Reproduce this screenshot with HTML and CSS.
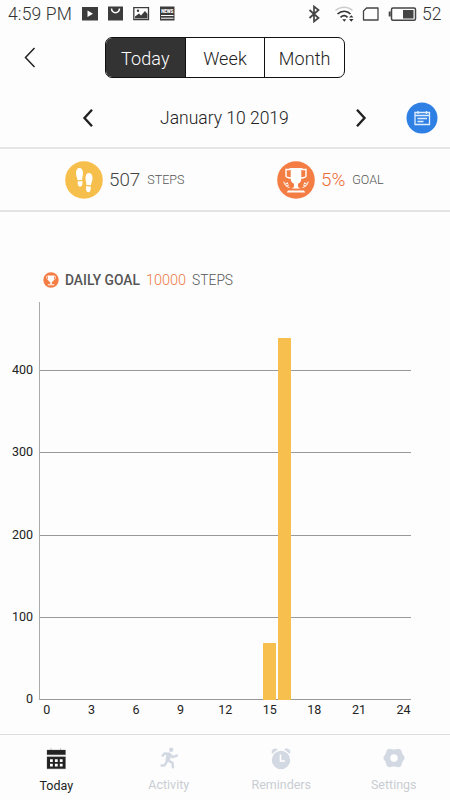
FILE: index.html
```html
<!DOCTYPE html>
<html lang="en">
<head>
<meta charset="utf-8">
<title>Steps</title>
<link rel="stylesheet" href="styles.css">
</head>
<body>
<svg width="0" height="0" class="defs">
  <symbol id="trophy" viewBox="0 0 38 38">
    <circle cx="19" cy="19" r="18.800" fill="#f47d43"/>
    <path d="M13 8.500H9v6.500c0 1.300 2 1.800 5 2M25 8.500h4v6.500c0 1.300-2 1.800-5 2" fill="none" stroke="#fff" stroke-width="1.400"/>
    <path d="M12.500 7h13v2h-1.200v8.500c0 3-1.500 4.500-3.300 5.200V26l2.500 1.500h-9L17 26v-3.300c-1.800-.7-3.300-2.200-3.300-5.200V9h-1.200zM11 29.500h16l1.200 2H9.800z" fill="#fff"/>
    <path d="M6.800 20.500c.5 3.200 2.500 5.300 5.700 6M8 23l2.800-.5M9.300 25l2.500-1M10 21.300l1 2M31.200 20.500c-.5 3.200-2.500 5.300-5.700 6M30 23l-2.800-.5M28.700 25l-2.500-1M28 21.300l-1 2" fill="none" stroke="#fff" stroke-width="1"/>
  </symbol>
  <symbol id="trophy-small" viewBox="0 0 16 16">
    <circle cx="8" cy="8" r="7.700" fill="#f47d43"/>
    <path d="M5 3.500h6v3.500c0 1.800-1 2.500-2.200 3V12H7.200v-2C6 9.500 5 8.800 5 7zM4.800 12.300h6.400v1H4.800z" fill="#fff"/>
    <path d="M5.500 4.200H3.700v2c0 1 .8 1.300 1.800 1.400M10.500 4.200h1.800v2c0 1-.8 1.300-1.800 1.400" fill="none" stroke="#fff" stroke-width=".7"/>
  </symbol>
</svg>
<div class="screen">
  <div class="status">
    <span class="clock">4:59 PM</span>
    <svg class="s-left" width="94" height="16" viewBox="0 0 94 16">
      <path d="M0 1h16v13.500H0z" fill="#3c3c3c"/><path d="M5.500 4.500v6.500l5.500-3.250z" fill="#fff"/>
      <path d="M26 .5h15v14H26z" fill="#3c3c3c"/><path d="M29.500 2.500c.5 5.500 7.500 5.500 8 0" fill="none" stroke="#fff" stroke-width="1.500"/>
      <path d="M51.800 1.600h14.700v12.100H51.800z" fill="#fff" stroke="#3c3c3c" stroke-width="1.300"/><path d="M53 12.500v-2l4-3 2 2 4-4.500 2.500 3v4.500z" fill="#3c3c3c"/><circle cx="56" cy="4.800" r="1.200" fill="#3c3c3c"/>
      <path d="M78 .5h14.500v14H78z" fill="#3c3c3c"/><path d="M79 9.500h12.500M79 12.200h12.500" stroke="#fff" stroke-width="1"/>
      <text x="79.300" y="6.500" class="news" textLength="12">NEWS</text>
    </svg>
    <svg class="s-right" width="112" height="18" viewBox="0 0 112 18">
      <path d="M3.500 5l9 8-4.500 3.500v-15l4.500 3.500-9 8" fill="none" stroke="#444" stroke-width="1.700"/>
      <path d="M29.500 5.500c5-4.500 12.500-4.500 17 0" fill="none" stroke="#ccc" stroke-width="1.500"/>
      <path d="M31.500 9c4-3.700 9.500-3.700 13 0M34.500 12.300c2.300-2 5-2 7 0" fill="none" stroke="#333" stroke-width="1.700"/>
      <path d="M36.300 14.300h4l-2 2.500zM43 12.500h4.500l-2.200-2.200zM43 14h4.500l-2.200 2.700z" fill="#333"/>
      <path d="M60.500 3h11.500v12H57.500V6z" fill="none" stroke="#444" stroke-width="1.300" stroke-linejoin="round"/>
      <rect x="85.500" y="3" width="24" height="12.300" rx="1.500" fill="none" stroke="#444" stroke-width="1.500"/>
      <path d="M97 5h10.500v8.500H97z" fill="#444"/><path d="M83.700 6.500v5" stroke="#444" stroke-width="2"/>
    </svg>
    <span class="level">52</span>
  </div>
  <div class="top">
    <svg class="back" width="12" height="22" viewBox="0 0 12 22"><path d="M10.500 2L1.500 11.500l9 9.500" fill="none" stroke="#222" stroke-width="1.500"/></svg>
    <div class="tabs"><span class="tab on">Today</span><span class="tab">Week</span><span class="tab">Month</span></div>
  </div>
  <div class="date">
    <svg class="prev" width="12" height="20" viewBox="0 0 12 20"><path d="M10 1.800L2.500 10l7.500 8.200" fill="none" stroke="#222" stroke-width="2.400"/></svg>
    <span class="day">January 10 2019</span>
    <svg class="next" width="12" height="20" viewBox="0 0 12 20"><path d="M2 1.800L9.500 10 2 18.200" fill="none" stroke="#222" stroke-width="2.400"/></svg>
    <svg class="cal" width="32" height="32" viewBox="0 0 32 32"><circle cx="16" cy="16" r="15.500" fill="#2f80e4"/><path d="M9 10.500h14.500v12H9zM9 13.500h14.500M12 9v3M20.500 9v3M11.500 16.500h9.500M11.500 19.500h6" fill="none" stroke="#e0edff" stroke-width="1.300"/></svg>
  </div>
  <div class="stats">
    <div class="stat steps">
      <svg width="38" height="38" viewBox="0 0 38 38"><circle cx="19" cy="19" r="18.800" fill="#f6bf4b"/><g fill="#fff"><path d="M14.500 7c2.400 0 3.700 2.500 3.500 5.500-.1 2.500-.8 4-.9 6.500l-4.600.3C12.300 17 11 15 11 12c0-3 1.200-5 3.500-5zM12.600 20.600l4.700-.5c.6 3-.2 5.700-2.300 5.700-1.700 0-2.500-2-2.400-5.200zM24 12c2.200 0 3.500 2 3.500 5 0 3-1.300 5-1.600 7.300l-4.500-.4c0-2.500-.9-4.500-.9-7C20.500 14 21.800 12 24 12zM21.300 25.100l4.600.6c0 3.300-.8 5.600-2.600 5.600-2 0-2.700-2.800-2-6.200z"/></g></svg>
      <span class="num">507</span><span class="unit">STEPS</span>
    </div>
    <div class="stat goal">
      <svg width="38" height="38"><use href="#trophy"/></svg>
      <span class="num orange">5%</span><span class="unit">GOAL</span>
    </div>
  </div>
  <div class="legend"><svg width="16" height="16"><use href="#trophy-small"/></svg><b>DAILY GOAL</b><span class="target">10000</span><span class="lsteps">STEPS</span></div>
  <div class="chart">
    <div class="ylabels"><span>400</span><span>300</span><span>200</span><span>100</span><span>0</span></div>
    <div class="plot">
      <div class="band first"></div><div class="band"></div><div class="band"></div><div class="band"></div><div class="band"></div>
      <div class="bar h15"></div><div class="bar h16"></div>
    </div>
  </div>
  <div class="xlabels"><span>0</span><span>3</span><span>6</span><span>9</span><span>12</span><span>15</span><span>18</span><span>21</span><span>24</span></div>
  <div class="nav">
    <div class="item on"><svg width="24" height="24" viewBox="0 0 24 24"><path d="M3 3h18.500v4.800H3zM3 9.800h18.500v12H3zM7 1v2M16.500 1v2" fill="#222" stroke="#555" stroke-width=".3"/><path d="M6 12.300h2.800v2.800H6zm4.900 0h2.800v2.800h-2.800zm4.900 0h2.800v2.800h-2.800zM6 16.700h2.800v2.800H6zm4.900 0h2.800v2.800h-2.800zm4.900 0h2.800v2.800h-2.800z" fill="#fff"/></svg><span>Today</span></div>
    <div class="item"><svg width="24" height="24" viewBox="0 0 24 24"><circle cx="14.200" cy="2.700" r="2.200" fill="#d3d9e3"/><path d="M5 9.500L7.500 6.500l4.500.3-2 6 5.500 3 .5 5.500M12.500 6.800l3.300 3.400 5-2M10 14l-2.500 4.500H3.500" fill="none" stroke="#d3d9e3" stroke-width="2.500" stroke-linejoin="round"/><path d="M9.500 6l5 1.500-1.800 7-4.200-1z" fill="#d3d9e3"/></svg><span>Activity</span></div>
    <div class="item"><svg width="24" height="24" viewBox="0 0 24 24"><circle cx="12" cy="13" r="9.200" fill="#d3d9e3"/><path d="M3 7C1.500 2.500 5.500 0 9 2.300zM21 7c1.500-4.500-2.500-7-6-4.700z" fill="#d3d9e3"/><path d="M11.500 7.500V14H16" fill="none" stroke="#fff" stroke-width="1.600"/></svg><span>Reminders</span></div>
    <div class="item"><svg width="24" height="24" viewBox="0 0 24 24"><path d="M7.500 2.500Q12 4 16.500 2.500L18.500 3.500Q19.500 8 21.700 10v2Q19.500 14 18.500 18.500l-2 1Q12 18 7.500 19.500l-2-1Q4.500 14 2.300 12v-2Q4.500 8 5.500 3.500z" fill="#d3d9e3" stroke="#d3d9e3" stroke-width="1.500" stroke-linejoin="round"/><circle cx="12" cy="11" r="3.700" fill="#fff"/></svg><span>Settings</span></div>
  </div>
</div>
</body>
</html>
```
FILE: styles.css
```css
* { box-sizing: border-box; }
body { margin: 0; background: #fdfdfd; font-family: Roboto, sans-serif; color: #222; }
svg { display: block; flex: none; }
.defs { position: absolute; }
.screen { width: 450px; height: 800px; display: flex; flex-direction: column; overflow: hidden; white-space: nowrap; }
.status { height: 28px; display: flex; align-items: center; padding-left: 8px; font-size: 17.5px; font-weight: 350; color: #333; }
.clock { width: 74px; letter-spacing: .15px; }
.news { font-size: 4.5px; font-weight: 900; fill: #fff; }
.s-right { margin-left: 130px; }
.level { margin-left: 4px; }
.top { height: 60px; display: flex; align-items: flex-start; padding: 9px 0 0 24px; }
.back { margin-top: 9px; }
.tabs { margin-left: 69px; width: 240px; height: 41px; display: flex; border: 1.5px solid #111; border-radius: 7px; overflow: hidden; background: #fff; }
.tab { flex: 1; display: flex; align-items: center; justify-content: center; font-size: 18px; font-weight: 350; padding-top: 2px; letter-spacing: .1px; }
.tab + .tab { border-left: 1.5px solid #111; }
.tab.on { background: #333; color: #fff; }
.date { height: 61px; display: flex; align-items: center; border-bottom: 2px solid #e6e6e6; padding-left: 82px; }
.day { width: 129px; margin-left: 66px; font-size: 17.5px; font-weight: 350; padding-top: 1px; }
.next { margin-left: 66px; }
.cal { margin-left: 39px; }
.stats { height: 63px; display: flex; border-bottom: 2px solid #e4e4e4; background: #fdfdfd; }
.stat { display: flex; align-items: center; color: #444; font-weight: 300; }
.steps { width: 212px; padding-left: 65px; }
.goal { padding-left: 65px; }
.num { margin-left: 6px; font-size: 18.8px; }
.unit { margin-left: 7px; font-size: 12.5px; color: #555; font-weight: 350; }
.orange { color: #ee6a34; }
.legend { height: 24px; margin-top: 56px; padding-left: 43px; display: flex; align-items: center; font-size: 13.8px; color: #555; }
.legend b { margin-left: 6px; font-weight: 500; }
.target { margin-left: 6px; color: #ee7a44; font-size: 14.5px; font-weight: 350; }
.lsteps { margin-left: 6px; font-weight: 350; }
.chart { height: 398px; margin-top: 10px; display: flex; }
.ylabels { width: 39px; padding: 59px 6px 0 0; flex: none; text-align: right; font-size: 12.5px; }
.ylabels span { display: block; height: 82.3px; line-height: 18px; }
.plot { position: relative; width: 372px; height: 398px; border-left: 1px solid #aaa; }
.band { height: 82.25px; border-top: 1px solid #999; }
.band.first { height: 68px; border: 0; }
.band:nth-child(5) { border-bottom: 1px solid #999; height: 83.25px; }
.bar { position: absolute; bottom: 0; width: 13px; background: #f7bf4d; }
.h15 { left: 223px; height: 57px; }
.h16 { left: 238px; height: 362px; }
.xlabels { display: grid; grid-template-columns: repeat(9, 44.6px); padding-left: 24.5px; height: 34px; font-size: 12.5px; text-align: center; line-height: 20px; }
.nav { height: 66px; border-top: 1px solid #ddd; display: flex; }
.item { width: 112.5px; display: flex; flex-direction: column; align-items: center; padding-top: 12px; font-size: 12.5px; color: #c9cdd3; }
.item span { margin-top: 6px; line-height: 16px; }
.item.on { color: #222; }
.item.on span { margin-top: 7px; }
```
